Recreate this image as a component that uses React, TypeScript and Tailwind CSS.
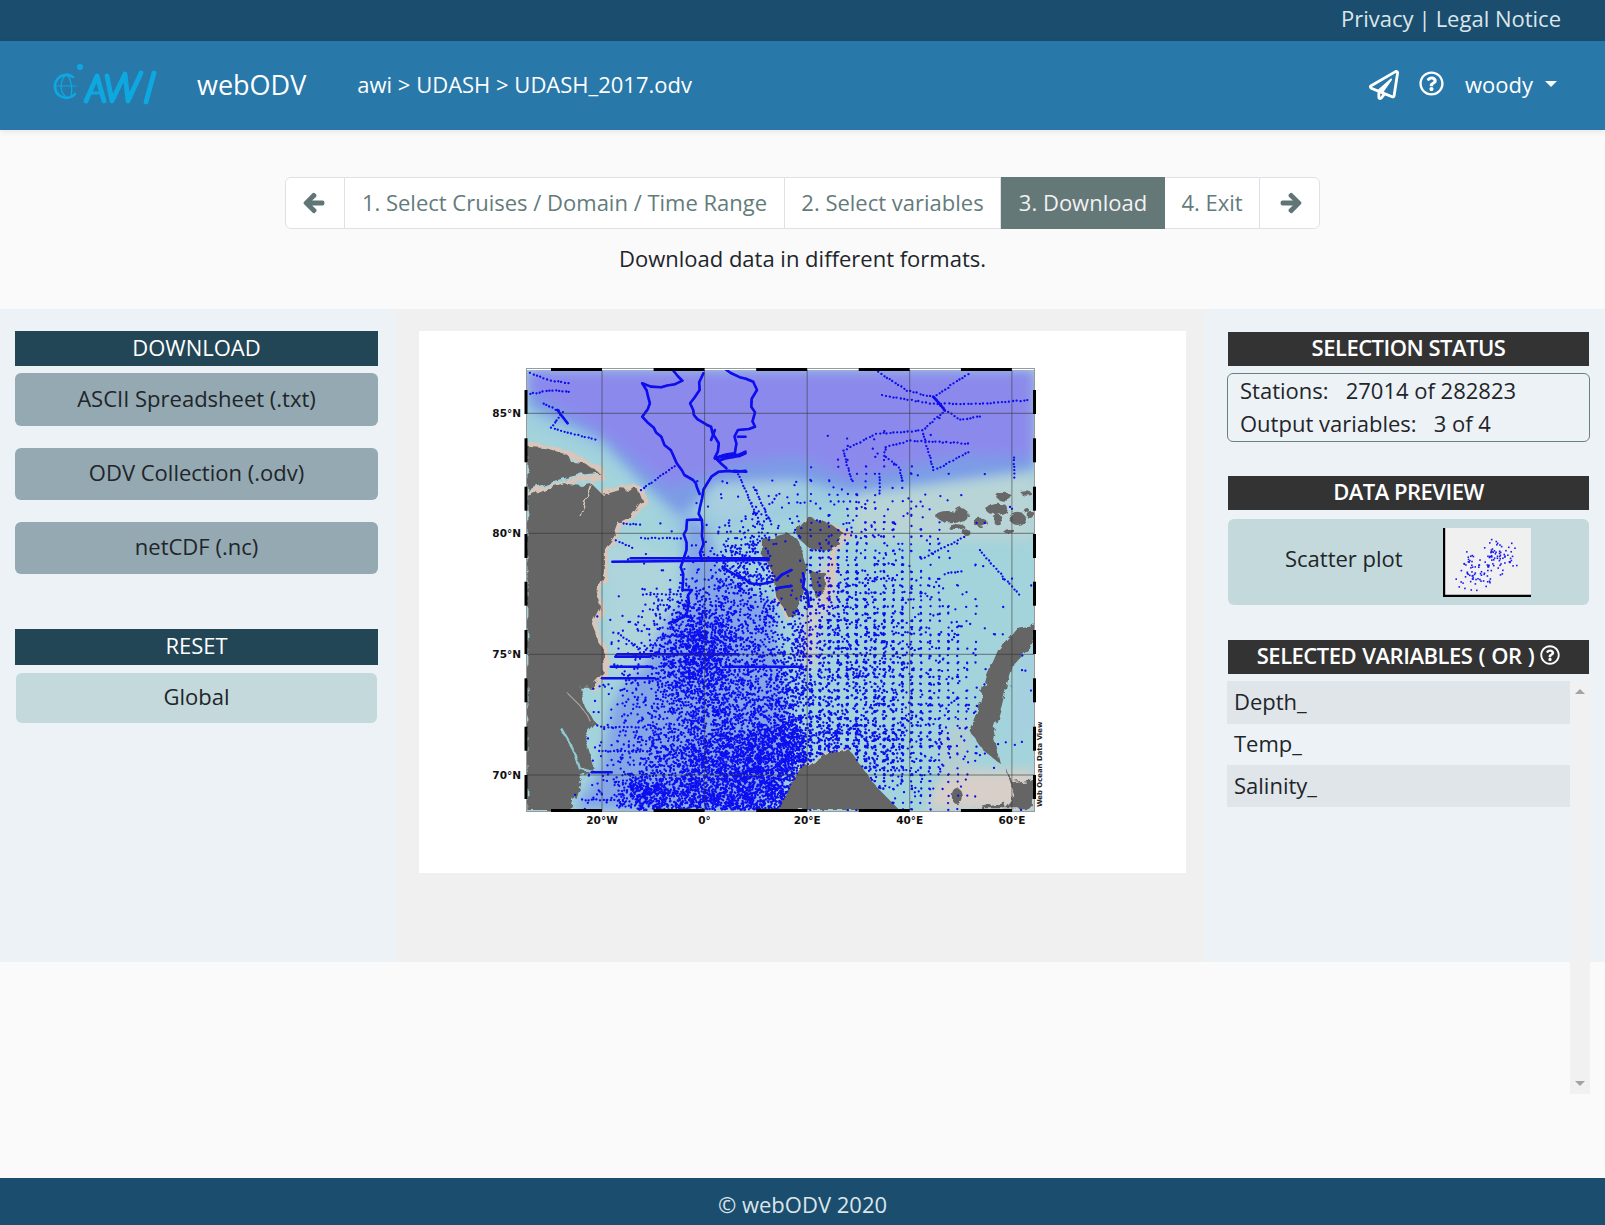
import { FaArrowLeft, FaArrowRight, FaRegPaperPlane, FaRegQuestionCircle } from 'react-icons/fa';

type Pt = [number, number];

// map shapes are written in the coordinates of a 1330 x 1330 plot frame (147..1476, 83..1412)
const greenland: Pt[] = [[150, 468], [200, 445], [245, 430], [290, 438], [318, 432], [345, 462], [395, 445], [440, 450], [450, 480], [420, 530], [385, 550], [372, 590], [350, 625], [350, 700], [330, 750], [340, 800], [318, 850], [350, 940], [352, 1000], [320, 1040], [285, 1040], [300, 1100], [330, 1150], [300, 1190], [326, 1290], [290, 1310], [262, 1410], [150, 1410]];
const greenlandNorth: Pt[] = [[150, 320], [200, 325], [255, 345], [262, 365], [300, 370], [338, 398], [280, 405], [210, 425], [150, 450]];
const spitsbergen: Pt[] = [[760, 600], [830, 580], [858, 600], [880, 680], [862, 800], [835, 835], [800, 770], [792, 700], [760, 640]];
const nordaust: Pt[] = [[850, 575], [885, 530], [950, 560], [977, 580], [945, 632], [885, 622], [862, 600]];
const edge: Pt[] = [[888, 690], [930, 700], [935, 758], [905, 775], [890, 730]];
const novaya: Pt[] = [[1476, 850], [1430, 860], [1380, 930], [1350, 1010], [1330, 1100], [1305, 1170], [1340, 1230], [1385, 1270], [1368, 1190], [1392, 1100], [1420, 970], [1476, 900]];
const norway: Pt[] = [[805, 1410], [860, 1290], [930, 1240], [990, 1228], [1030, 1290], [1062, 1340], [1122, 1410]];
const russiaA: Pt[] = [[1398, 1280], [1420, 1330], [1476, 1320], [1476, 1405], [1400, 1405], [1425, 1370]];
const russiaB: Pt[] = [[1320, 1405], [1395, 1385], [1400, 1405]];
const franzBlobs: [number, number, number, number][] = [[1250, 530, 32, 14], [1285, 525, 16, 20], [1270, 560, 22, 10], [1295, 575, 10, 10], [1335, 550, 18, 14], [1375, 505, 28, 20], [1395, 470, 20, 12], [1380, 540, 12, 16], [1430, 535, 20, 20], [1410, 575, 14, 8], [1462, 522, 10, 12], [1455, 462, 14, 5]];

const tracks: Pt[][] = [
  [[530, 90], [555, 122], [500, 142], [450, 130], [470, 190], [450, 230], [500, 290], [540, 370], [590, 430], [600, 462]],
  [[610, 100], [600, 150], [575, 190], [585, 225], [630, 260], [650, 310], [640, 352], [670, 385]],
  [[670, 90], [740, 125], [750, 150], [735, 200], [745, 260], [700, 270], [692, 340], [640, 355], [720, 340]],
  [[720, 392], [650, 395], [620, 430], [601, 501], [606, 540], [567, 540], [557, 660], [555, 750], [580, 750], [560, 830], [520, 850]],
  [[606, 540], [606, 660]],
  [[660, 680], [730, 730], [790, 725]],
  [[640, 355], [720, 335]], [[650, 362], [705, 345]], [[640, 270], [630, 300]], [[700, 290], [720, 290]], [[690, 392], [722, 395]],
  [[800, 720], [840, 690]], [[800, 745], [840, 738]], [[870, 700], [885, 800]], [[228, 210], [255, 250]], [[1210, 170], [1240, 210]],
];

// long straight sections along one parallel
const sections: Pt[][] = [
  [[372, 665], [780, 660]], [[420, 655], [780, 655]], [[385, 943], [700, 943]], [[368, 980], [475, 980]], [[670, 980], [870, 980]], [[345, 1015], [480, 1015]], [[380, 950], [470, 950]], [[318, 1297], [370, 1297]],
];

const sparseTracks: Pt[][] = [
  [[155, 98], [200, 118], [265, 130]], [[155, 160], [215, 150], [265, 155]], [[190, 190], [240, 215], [210, 262], [335, 300]],
  [[1065, 95], [1140, 150], [1210, 170], [1240, 210], [1180, 270], [1060, 280], [975, 330], [990, 400], [1000, 430]],
  [[1075, 165], [1210, 190], [1340, 190], [1465, 178]], [[1240, 210], [1280, 238], [1340, 225]], [[1300, 100], [1210, 170]],
  [[1085, 320], [1150, 300], [1310, 310]], [[1085, 320], [1080, 345], [1120, 380], [1130, 430]], [[1180, 270], [1210, 390]], [[1210, 390], [1310, 330]],
  [[1068, 400], [1068, 470]], [[445, 450], [540, 370]], [[445, 593], [560, 593]], [[450, 762], [560, 762]], [[380, 600], [430, 625]], [[400, 548], [450, 555]],
  [[700, 400], [760, 560]], [[740, 440], [790, 560]], [[385, 880], [450, 930]], [[335, 1232], [480, 1232]], [[290, 1378], [385, 1378]], [[340, 1160], [460, 1160]],
  [[1150, 1290], [1050, 1290]], [[1420, 350], [1420, 420]], [[1290, 590], [1170, 660]], [[1330, 630], [1440, 770]], [[1240, 700], [1290, 690]],
];

// soft dot clouds: centre x, centre y, sigma x, sigma y, weight
const clouds: [number, number, number, number, number][] = [
  [700, 1350, 140, 130, 1.1], [950, 1205, 120, 50, 0.75], [590, 945, 60, 95, 0.9], [860, 1060, 210, 180, 0.3],
  [1050, 980, 105, 250, 0.24], [730, 690, 60, 95, 0.26], [1000, 540, 170, 45, 0.02], [1230, 1150, 45, 150, 0.03],
  [440, 1220, 80, 170, 0.03], [460, 1362, 30, 30, 1.3], [940, 800, 70, 130, 0.12], [800, 470, 110, 40, 0.015],
];

function mulberry(seed: number) {
  return () => {
    seed = (seed + 0x6d2b79f5) | 0;
    let t = Math.imul(seed ^ (seed >>> 15), 1 | seed);
    t = (t + Math.imul(t ^ (t >>> 7), 61 | t)) ^ t;
    return ((t ^ (t >>> 14)) >>> 0) / 4294967296;
  };
}

function inside(p: Pt, poly: Pt[]) {
  let hit = false;
  for (let i = 0, j = poly.length - 1; i < poly.length; j = i++) {
    const [xi, yi] = poly[i];
    const [xj, yj] = poly[j];
    if (yi > p[1] !== yj > p[1] && p[0] < ((xj - xi) * (p[1] - yi)) / (yj - yi) + xi) hit = !hit;
  }
  return hit;
}

const px = (x: number) => (51 + x * 0.3827).toFixed(1);
const py = (y: number) => (9 + y / 3).toFixed(1);
const points = (poly: Pt[]) => poly.map(([x, y]) => `${px(x)},${py(y)}`).join(' ');

function buildDots() {
  const rand = mulberry(7);
  let d = '';
  const add = (x: number, y: number) => {
    d += `M${px(x)} ${py(y)}h.01`;
  };
  for (let i = 0; i < 75000; i++) {
    let p: Pt = [150 + rand() * 1325, 90 + rand() * 1320];
    let w = 0;
    clouds.forEach(([cx, cy, sx, sy, k]) => {
      w += k * Math.exp(-(((p[0] - cx) / sx) ** 2 + ((p[1] - cy) / sy) ** 2) / 2);
    });
    if (rand() > w) continue;
    // east of 20E the cruises lie on a regular station grid
    if (p[0] > 880 && rand() < 0.7) p = [Math.round(p[0] / 24) * 24 + rand() * 4, Math.round(p[1] / 21) * 21 + rand() * 4];
    if ([greenland, norway, novaya].some((l) => inside(p, l))) continue;
    if (inside(p, spitsbergen) && rand() < 0.8) continue;
    add(p[0], p[1]);
  }
  sparseTracks.forEach((t) => {
    for (let i = 0; i < t.length - 1; i++) {
      const [a, b] = [t[i], t[i + 1]];
      const n = Math.ceil(Math.hypot(b[0] - a[0], b[1] - a[1]) / 10);
      for (let k = 0; k < n; k++) add(a[0] + ((b[0] - a[0]) * k) / n + rand() * 3, a[1] + ((b[1] - a[1]) * k) / n + rand() * 3);
    }
  });
  return d;
}

const dots = buildDots();

// ship tracks wander a little, they are not straight between the waypoints
const wobblyTracks = (() => {
  const rand = mulberry(33);
  return tracks.map((t) => {
    const out: Pt[] = [t[0]];
    for (let i = 0; i < t.length - 1; i++) {
      const [a, b] = [t[i], t[i + 1]];
      const n = Math.max(1, Math.round(Math.hypot(b[0] - a[0], b[1] - a[1]) / 22));
      for (let k = 1; k <= n; k++) {
        const j = k === n ? 0 : 1;
        out.push([a[0] + ((b[0] - a[0]) * k) / n + j * (rand() - 0.5) * 14, a[1] + ((b[1] - a[1]) * k) / n + j * (rand() - 0.5) * 12]);
      }
    }
    return out;
  });
})();

const scatter = (() => {
  const rand = mulberry(21);
  const out: Pt[] = [];
  for (let i = 0; i < 135; i++) {
    const t = (rand() + rand() + 0.3 * rand()) / 2.3;
    const s = (rand() + rand() - 1) * 26;
    out.push([6 + t * 76 + s * 0.62, 64 - t * 60 + s * 0.72]);
  }
  return out.filter(([x, y]) => x > 4 && x < 85 && y > 3 && y < 65);
})();

function OceanMap() {
  const xTicks = [345, 613, 881, 1149, 1416];
  const yTicks = [220, 580, 943, 1305];
  const vBars = [150, 295, 440, 582, 725, 870, 1015, 1160, 1305];
  return (
    <svg width="767" height="542" viewBox="0 0 767 542" className="block bg-white">
      <defs>
        <filter id="soft" x="-5%" y="-5%" width="110%" height="110%"><feGaussianBlur stdDeviation="6" /></filter>
        <filter id="tiny"><feGaussianBlur stdDeviation="0.3" /></filter>
        <filter id="rough" x="-5%" y="-5%" width="110%" height="110%">
          <feTurbulence type="fractalNoise" baseFrequency="0.09" numOctaves="3" seed="4" />
          <feDisplacementMap in="SourceGraphic" scale="9" />
        </filter>
        <clipPath id="frame"><rect x="107" y="39" width="509" height="441" /></clipPath>
      </defs>
      <g clipPath="url(#frame)">
        <rect x="107" y="39" width="509" height="441" fill="#a3d3db" />
        <g filter="url(#soft)">
          <polygon fill="#9ccbe0" points={points([[150, 170], [340, 280], [470, 450], [560, 520], [600, 450], [880, 440], [1476, 370], [1476, 430], [1100, 460], [700, 560], [560, 640], [480, 480], [340, 340], [150, 250]])} />
          <polygon fill="#a8cfdf" points={points([[620, 440], [790, 420], [850, 400], [840, 480], [700, 540], [630, 530]])} />
          <polygon fill="#84a6e6" points={points([[560, 520], [620, 560], [660, 700], [790, 790], [800, 900], [830, 1100], [830, 1300], [760, 1410], [270, 1410], [340, 1290], [370, 1100], [420, 1000], [500, 850], [560, 780]])} />
          <polygon fill="#7b9be6" points={points([[150, 90], [150, 200], [340, 300], [460, 440], [550, 530], [600, 480], [640, 430], [850, 420], [1000, 460], [1476, 390], [1476, 90]])} />
          <polygon fill="#8b8aec" points={points([[150, 90], [150, 150], [330, 270], [430, 360], [520, 440], [610, 410], [700, 370], [850, 350], [1000, 420], [1140, 380], [1290, 345], [1476, 350], [1476, 90]])} />
          <polygon fill="#aed4dc" points={points([[350, 620], [430, 600], [540, 660], [520, 830], [440, 1000], [370, 1000]])} />
          <polygon fill="#d8cfc8" points={points([[1190, 1410], [1225, 1320], [1300, 1295], [1476, 1290], [1476, 1410]])} />
          <polygon fill="#b4cfd2" points={points([[1230, 1180], [1300, 1130], [1320, 1290], [1230, 1320]])} />
          <polygon fill="#a6d0e0" points={points([[1440, 950], [1476, 900], [1476, 1180], [1410, 1200]])} />
          <polygon fill="#d8cdc6" points={points([[875, 800], [915, 800], [900, 985], [868, 985]])} />
          <polygon fill="#d8cdc6" points={points([[920, 650], [960, 700], [940, 830], [905, 800]])} />
          <polygon fill="#b8d4d6" points={points([[1000, 470], [1476, 400], [1476, 600], [1000, 600]])} />
        </g>
        <g filter="url(#rough)">
          <g fill="none" stroke="#d8c6bb" strokeLinejoin="round" strokeLinecap="round">
            <polyline strokeWidth="6" points={points([[150, 315], [255, 340], [345, 392]])} />
            <polyline strokeWidth="5" points={points([[345, 405], [260, 425], [150, 458]])} />
            <polyline strokeWidth="4" points={points([[320, 430], [295, 530]])} />
            <polyline strokeWidth="3.5" points={points([[270, 430], [240, 478]])} />
            <polyline strokeWidth="7" points={points([[345, 462], [395, 445], [442, 450], [452, 482], [422, 532], [388, 552], [374, 592], [352, 627], [352, 700], [332, 750], [342, 800], [320, 850], [352, 940], [354, 1000], [322, 1040]])} />
            <polyline strokeWidth="6" points={points([[880, 540], [990, 580], [950, 640], [935, 780]])} />
            <polyline strokeWidth="4" points={points([[800, 770], [835, 840], [762, 610]])} />
            <polyline strokeWidth="3" points={points([[860, 1290], [930, 1240], [990, 1228]])} />
          </g>
          {[greenland, greenlandNorth, spitsbergen, nordaust, edge, novaya, norway, russiaA, russiaB].map((p, i) => (
            <polygon key={i} fill="#656565" points={points(p)} />
          ))}
          {franzBlobs.map(([x, y, rx, ry], i) => (
            <ellipse key={i} cx={px(x)} cy={py(y)} rx={rx * 0.3827} ry={ry / 3} fill="#676767" />
          ))}
          <ellipse cx={px(1272)} cy={py(1368)} rx="5" ry="8" fill="#656565" />
          <polyline fill="none" stroke="#d8c6bb" strokeWidth="1.6" points={points([[320, 432], [290, 530]])} />
          <polyline fill="none" stroke="#8fc9d2" strokeWidth="2.4" points={points([[238, 1165], [270, 1230], [285, 1285], [335, 1300]])} />
          <polyline fill="none" stroke="#a9a39c" strokeWidth="1.2" points={points([[255, 1060], [290, 1100], [320, 1150]])} />
        </g>
        <g filter="url(#tiny)">
          <path d={dots} fill="none" stroke="#0808f0" strokeWidth="2.3" strokeLinecap="round" />
          {[...wobblyTracks, ...sections].map((t, i) => (
            <polyline key={i} points={points(t)} fill="none" stroke="#0808f0" strokeWidth="2.6" strokeLinejoin="round" strokeLinecap="round" />
          ))}
        </g>
        {xTicks.map((x) => (
          <line key={x} x1={px(x)} x2={px(x)} y1="39" y2="480" stroke="#333" strokeOpacity="0.55" />
        ))}
        {yTicks.map((y) => (
          <line key={y} x1="107" x2="616" y1={py(y)} y2={py(y)} stroke="#333" strokeOpacity="0.6" />
        ))}
      </g>
      <rect x="107.5" y="37.5" width="508" height="443" fill="none" stroke="#999" />
      {xTicks.map((x) => (
        <g key={x}>
          <rect x={Number(px(x)) - 51} y="37" width="51" height="3" fill="#000" />
          <rect x={Number(px(x)) - 51} y="478" width="51" height="3" fill="#000" />
          <text x={px(x)} y="493" textAnchor="middle" fontSize="10.5" fontWeight="700" fontFamily="'DejaVu Sans',sans-serif" fill="#111">
            {x === 345 ? '20°W' : x === 613 ? '0°' : x === 881 ? '20°E' : x === 1149 ? '40°E' : '60°E'}
          </text>
        </g>
      ))}
      {vBars.map((y) => (
        <g key={y}>
          <rect x="105.5" y={py(y)} width="3" height="24" fill="#000" />
          <rect x="614" y={py(y)} width="3" height="24" fill="#000" />
        </g>
      ))}
      {yTicks.map((y, i) => (
        <text key={y} x="102" y={Number(py(y)) + 4} textAnchor="end" fontSize="10.5" fontWeight="700" fontFamily="'DejaVu Sans',sans-serif" fill="#111">
          {['85°N', '80°N', '75°N', '70°N'][i]}
        </text>
      ))}
      <text transform="translate(623 476) rotate(-90)" fontSize="6.9" fontWeight="700" fontFamily="'DejaVu Sans',sans-serif" fill="#222">
        Web Ocean Data View
      </text>
    </svg>
  );
}

function AwiLogo() {
  return (
    <svg width="130" height="65" viewBox="0 0 130 65" className="shrink-0">
      <g fill="none" stroke="#0ea8e0" strokeLinecap="round" strokeLinejoin="round">
        <path d="M33 24 A11.5 11.5 0 1 0 35 41" strokeWidth="2.6" />
        <path d="M27 21 C20 26 19 38 25 43" strokeWidth="1.3" />
        <path d="M27 21 C31 26 33 36 31 43" strokeWidth="1.3" />
        <path d="M16 33 H36" strokeWidth="1.1" />
        <path d="M46 48 L57 23 L64 48 M67 23 L72 48 L85 21 L88 48 L101 20 M106 49 L114 20" strokeWidth="4.8" />
        <path d="M50 40 H62" strokeWidth="3" />
      </g>
      <circle cx="40" cy="14" r="3" fill="#0ea8e0" />
    </svg>
  );
}

function SectionHead({ children, dark }: { children: React.ReactNode; dark?: boolean }) {
  return (
    <div className={dark ? 'flex h-[34px] items-center justify-center bg-[#333333] pb-[4px] text-[22px] font-semibold tracking-[-0.5px] text-white' : 'flex h-[35px] items-center justify-center bg-[#234657] pb-[3px] text-white'}>
      {children}
    </div>
  );
}

const steps = [
  { label: '1. Select Cruises / Domain / Time Range', w: 'w-[440px]' },
  { label: '2. Select variables', w: 'w-[216px]' },
  { label: '3. Download', w: 'w-[164px]', active: true },
  { label: '4. Exit', w: 'w-[95px]' },
];

export default function App() {
  return (
    <div className="flex h-[1225px] flex-col overflow-hidden bg-[#fafafa] font-['Open_Sans',sans-serif] text-[22px] text-[#212529]">
      <div className="flex h-[41px] shrink-0 items-center justify-end bg-[#1a4d6e] pb-[4px] pr-[44px] text-[#dbe5ea]">
        <span>Privacy</span>
        <span className="mx-[5px]">|</span>
        <span>Legal Notice</span>
      </div>

      <header className="relative flex h-[89px] shrink-0 items-center bg-[#2878a9] pl-[40px] pr-[48px] text-white shadow-[0_2px_6px_rgba(0,0,0,0.08)]">
        <AwiLogo />
        <span className="ml-[27px] text-[27px]">webODV</span>
        <span className="mb-[2px] ml-[51px]">awi &gt; UDASH &gt; UDASH_2017.odv</span>
        <div className="ml-auto flex items-center">
          <FaRegPaperPlane className="mb-[2px] text-[30px]" />
          <FaRegQuestionCircle className="mb-[5px] ml-[20px] text-[25px]" />
          <span className="mb-[2px] ml-[21px]">woody</span>
          <span className="mb-[4px] ml-[12px] h-0 w-0 border-x-[6px] border-t-[6px] border-x-transparent border-t-white" />
        </div>
      </header>

      <section className="flex h-[179px] shrink-0 flex-col items-center pt-[47px]">
        <div className="flex h-[52px] w-[1035px] rounded-[6px] border border-[#dee2e6] bg-white text-[#647b7b]">
          <div className="flex w-[59px] items-center justify-center border-r border-[#dee2e6] pr-[2px] text-[22px] text-[#5f7576]">
            <FaArrowLeft stroke="currentColor" strokeWidth={36} />
          </div>
          {steps.map((s) => (
            <div key={s.label} className={`flex ${s.w} items-center justify-center whitespace-nowrap pb-[2px] ${s.active ? '-my-px bg-[#647878] text-[#f2f2f2]' : 'border-r border-[#dee2e6]'}`}>
              {s.label}
            </div>
          ))}
          <div className="flex flex-1 items-center justify-center pl-[3px] text-[22px] text-[#5f7576]">
            <FaArrowRight stroke="currentColor" strokeWidth={36} />
          </div>
        </div>
        <p className="mt-[13px]">Download data in different formats.</p>
      </section>

      <main className="flex h-[653px] shrink-0">
        <aside className="w-[397px] bg-[#edf2f6] pl-[15px] pr-[19px] pt-[22px]">
          <SectionHead>DOWNLOAD</SectionHead>
          <div className="mt-[7px] flex h-[53px] items-center justify-center rounded-[6px] bg-[#94a9b2] pb-[3px]">ASCII Spreadsheet (.txt)</div>
          <div className="mt-[22px] flex h-[52px] items-center justify-center rounded-[6px] bg-[#94a9b2] pb-[3px]">ODV Collection (.odv)</div>
          <div className="mt-[22px] flex h-[52px] items-center justify-center rounded-[6px] bg-[#94a9b2] pb-[3px]">netCDF (.nc)</div>
          <div className="mt-[55px]">
            <div className="flex h-[36px] items-center justify-center bg-[#234657] pb-[3px] text-white">RESET</div>
          </div>
          <div className="mx-px mt-[8px] flex h-[50px] items-center justify-center rounded-[6px] bg-[#c4d9db] pb-[4px]">Global</div>
        </aside>

        <div className="flex-1 bg-[#f0f0f0] pl-[22px] pt-[22px]">
          <OceanMap />
        </div>

        <aside className="relative w-[400px] bg-[#edf2f6] pl-[23px] pr-[16px] pt-[23px]">
          <SectionHead dark>SELECTION STATUS</SectionHead>
          <div className="-mx-px mt-[7px] h-[69px] rounded-[6px] border border-[#6a8085] px-[12px] leading-[33px]">
            <div className="whitespace-pre">Stations:   27014 of 282823</div>
            <div className="whitespace-pre">Output variables:   3 of 4</div>
          </div>
          <div className="mt-[34px]">
            <SectionHead dark>DATA PREVIEW</SectionHead>
          </div>
          <div className="mt-[9px] flex h-[86px] items-center rounded-[6px] bg-[#c4d9db] pl-[57px]">
            <span className="pb-[7px]">Scatter plot</span>
            <svg width="88" height="69" viewBox="0 0 88 69" className="ml-[40px] bg-[#f0f0f0]">
              {scatter.map(([x, y], i) => (
                <rect key={i} x={x} y={y} width="1.6" height="1.6" fill="#1a1af0" />
              ))}
              <path d="M1 0V68H88" fill="none" stroke="#000" strokeWidth="2.4" />
            </svg>
          </div>
          <div className="mt-[35px] [word-spacing:1px]">
            <SectionHead dark>
              SELECTED VARIABLES ( OR )
              <FaRegQuestionCircle className="ml-[6px] text-[20px]" />
            </SectionHead>
          </div>
          <div className="-ml-px mt-[7px] w-[343px] leading-none">
            <div className="flex h-[43px] items-center bg-[#e0e5e9] px-[7px] pb-[3px]">Depth_</div>
            <div className="flex h-[41px] items-center px-[7px] pb-[3px]">Temp_</div>
            <div className="flex h-[42px] items-center bg-[#e0e5e9] px-[7px] pb-[2px]">Salinity_</div>
          </div>
          {/* scrollbar of the list runs on past the bottom of the panel */}
          <div className="absolute left-[365px] top-[372px] flex h-[413px] w-[20px] flex-col items-center justify-between bg-[#f1f1f1] py-[8px]">
            <span className="h-0 w-0 border-x-[5px] border-b-[5px] border-x-transparent border-b-[#a3a3a3]" />
            <span className="h-0 w-0 border-x-[5px] border-t-[5px] border-x-transparent border-t-[#a3a3a3]" />
          </div>
        </aside>
      </main>

      <div className="flex-1" />

      <footer className="flex h-[47px] shrink-0 items-center justify-center bg-[#1a4d6e] pt-[5px] text-[#dbe5ea]">© webODV 2020</footer>
    </div>
  );
}
